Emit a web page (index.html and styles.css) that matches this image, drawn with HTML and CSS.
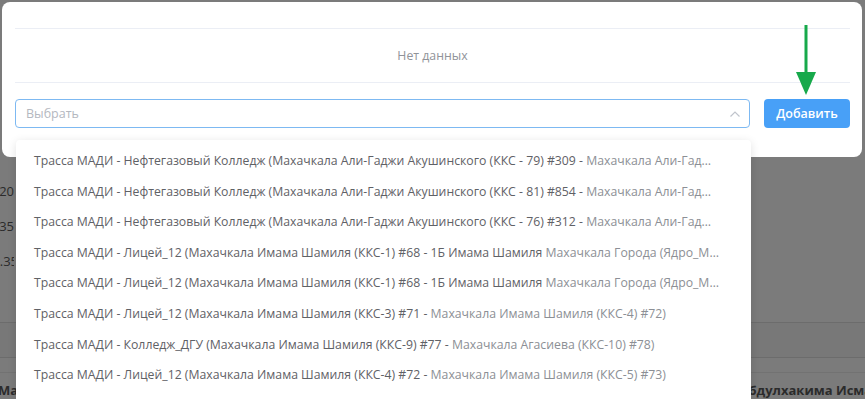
FILE: index.html
```html
<!DOCTYPE html>
<html lang="ru">
<head>
  <meta charset="UTF-8">
  <meta name="viewport" content="width=device-width, initial-scale=1.0">
  <title>Маршруты</title>
  <link rel="stylesheet" href="styles.css">
</head>
<body>

  <!-- страница под затемнением -->
  <div class="page">
    <div class="times">
      <div class="time">14.20</div>
      <div class="time">15.35</div>
      <div class="time time-shift">16.35</div>
    </div>
    <div class="table-band"></div>
    <div class="table-row">
      <span class="cell-left">Махачкала</span>
      <span class="cell-right">Абдулхакима Исмаилова</span>
    </div>
  </div>

  <!-- модальное окно -->
  <div class="modal">
    <div class="modal-head"></div>
    <div class="empty">Нет данных</div>
    <div class="add-row">
      <div class="select">
        <span class="placeholder">Выбрать</span>
        <svg class="chevron" width="12" height="8" viewBox="0 0 12 8">
          <path d="M1.5 6.5 L6 2 L10.5 6.5" fill="none" stroke="#c0c4cc" stroke-width="1.2"/>
        </svg>
      </div>
      <button class="btn-add">Добавить</button>
    </div>

    <svg class="hint-arrow" width="24" height="72" viewBox="0 0 24 72">
      <rect x="10.5" y="0" width="3" height="50" fill="#17a94b"/>
      <path d="M2 47 L22 47 L12 70 Z" fill="#17a94b"/>
    </svg>
  </div>

  <!-- выпадающий список -->
  <ul class="dropdown">
    <li class="item"><span class="dark">Трасса МАДИ - Нефтегазовый Колледж (Махачкала Али-Гаджи Акушинского (ККС - 79) #309 - </span>Махачкала Али-Гаджи Акушинского (ККС - 80) #310)</li>
    <li class="item"><span class="dark">Трасса МАДИ - Нефтегазовый Колледж (Махачкала Али-Гаджи Акушинского (ККС - 81) #854 - </span>Махачкала Али-Гаджи Акушинского (ККС - 82) #855)</li>
    <li class="item"><span class="dark">Трасса МАДИ - Нефтегазовый Колледж (Махачкала Али-Гаджи Акушинского (ККС - 76) #312 - </span>Махачкала Али-Гаджи Акушинского (ККС - 77) #313)</li>
    <li class="item"><span class="dark">Трасса МАДИ - Лицей_12 (Махачкала Имама Шамиля (ККС-1) #68 - 1Б Имама Шамиля </span>Махачкала Города (Ядро_Махачкала) #69)</li>
    <li class="item"><span class="dark">Трасса МАДИ - Лицей_12 (Махачкала Имама Шамиля (ККС-1) #68 - 1Б Имама Шамиля </span>Махачкала Города (Ядро_Махачкала) #70)</li>
    <li class="item"><span class="dark">Трасса МАДИ - Лицей_12 (Махачкала Имама Шамиля (ККС-3) #71 - </span>Махачкала Имама Шамиля (ККС-4) #72)</li>
    <li class="item"><span class="dark">Трасса МАДИ - Колледж_ДГУ (Махачкала Имама Шамиля (ККС-9) #77 - </span>Махачкала Агасиева (ККС-10) #78)</li>
    <li class="item"><span class="dark">Трасса МАДИ - Лицей_12 (Махачкала Имама Шамиля (ККС-4) #72 - </span>Махачкала Имама Шамиля (ККС-5) #73)</li>
  </ul>

</body>
</html>
```

FILE: styles.css
```css
* {
  box-sizing: border-box;
}

body {
  margin: 0;
  height: 399px;
  overflow: hidden;
  background-color: #7b7b7b;
  font-family: 'Open Sans', 'Liberation Sans', sans-serif;
}

/* фон страницы */
.page {
  display: flex;
  flex-direction: column;
  height: 399px;
  padding-top: 182px;
  overflow: hidden;
  color: #2b2b2b;
  font-size: 13px;
}

.times {
  display: flex;
  flex-direction: column;
  gap: 16px;
  width: 14px;
  overflow: hidden;
}

.time {
  display: flex;
  justify-content: flex-end;
  height: 19px;
  white-space: nowrap;
}

.time-shift {
  margin-right: -4px;
}

.table-band {
  flex-shrink: 0;
  margin-top: 51px;
  height: 36px;
  border-top: 1px solid #6c6c6c;
  border-bottom: 1px solid #6c6c6c;
  background-color: #787878;
}

.table-row {
  display: flex;
  justify-content: space-between;
  flex-shrink: 0;
  margin-top: 14px;
  padding-top: 8px;
  overflow: hidden;
  border-top: 1px solid #727272;
  font-weight: 700;
  white-space: nowrap;
}

.cell-left {
  margin-left: -2px;
}

.cell-right {
  margin-right: -49px;
}

/* модальное окно */
.modal {
  position: absolute;
  left: 2px;
  top: 2px;
  width: 860px;
  height: 155px;
  padding: 0 12px 0 13px;
  background-color: #fff;
  border-radius: 8px;
}

.modal-head {
  height: 27px;
  border-bottom: 1px solid #ebeef5;
}

.empty {
  display: flex;
  align-items: center;
  justify-content: center;
  height: 54px;
  border-bottom: 1px solid #ebeef5;
  color: #909399;
  font-size: 12.3px;
}

.add-row {
  display: flex;
  gap: 14px;
  margin-top: 16px;
}

.select {
  display: flex;
  align-items: center;
  justify-content: space-between;
  flex: 1;
  height: 29px;
  padding: 0 8px 0 10px;
  border: 1px solid #7db9f2;
  border-radius: 4px;
}

.placeholder {
  color: #b4b8c0;
  font-size: 12.5px;
}

.btn-add {
  width: 86px;
  height: 29px;
  border: none;
  border-radius: 4px;
  background-color: #48a0f7;
  color: #fff;
  font-family: inherit;
  font-size: 12.5px;
  font-weight: 600;
}

.hint-arrow {
  position: absolute;
  left: 792px;
  top: 23px;
}

/* выпадающий список */
.dropdown {
  position: absolute;
  left: 16px;
  top: 140px;
  width: 735px;
  height: 259px;
  margin: 0;
  padding: 6px 0;
  overflow: hidden;
  list-style: none;
  background-color: #fff;
  border-radius: 4px 4px 0 0;
  box-shadow: 0 2px 10px rgba(0, 0, 0, 0.12);
}

.item {
  height: 30.6px;
  line-height: 30.6px;
  padding: 0 32px 0 18px;
  overflow: hidden;
  white-space: nowrap;
  text-overflow: ellipsis;
  color: #8c8f95;
  font-size: 12.25px;
}

.dark {
  color: #5f6166;
}
```
